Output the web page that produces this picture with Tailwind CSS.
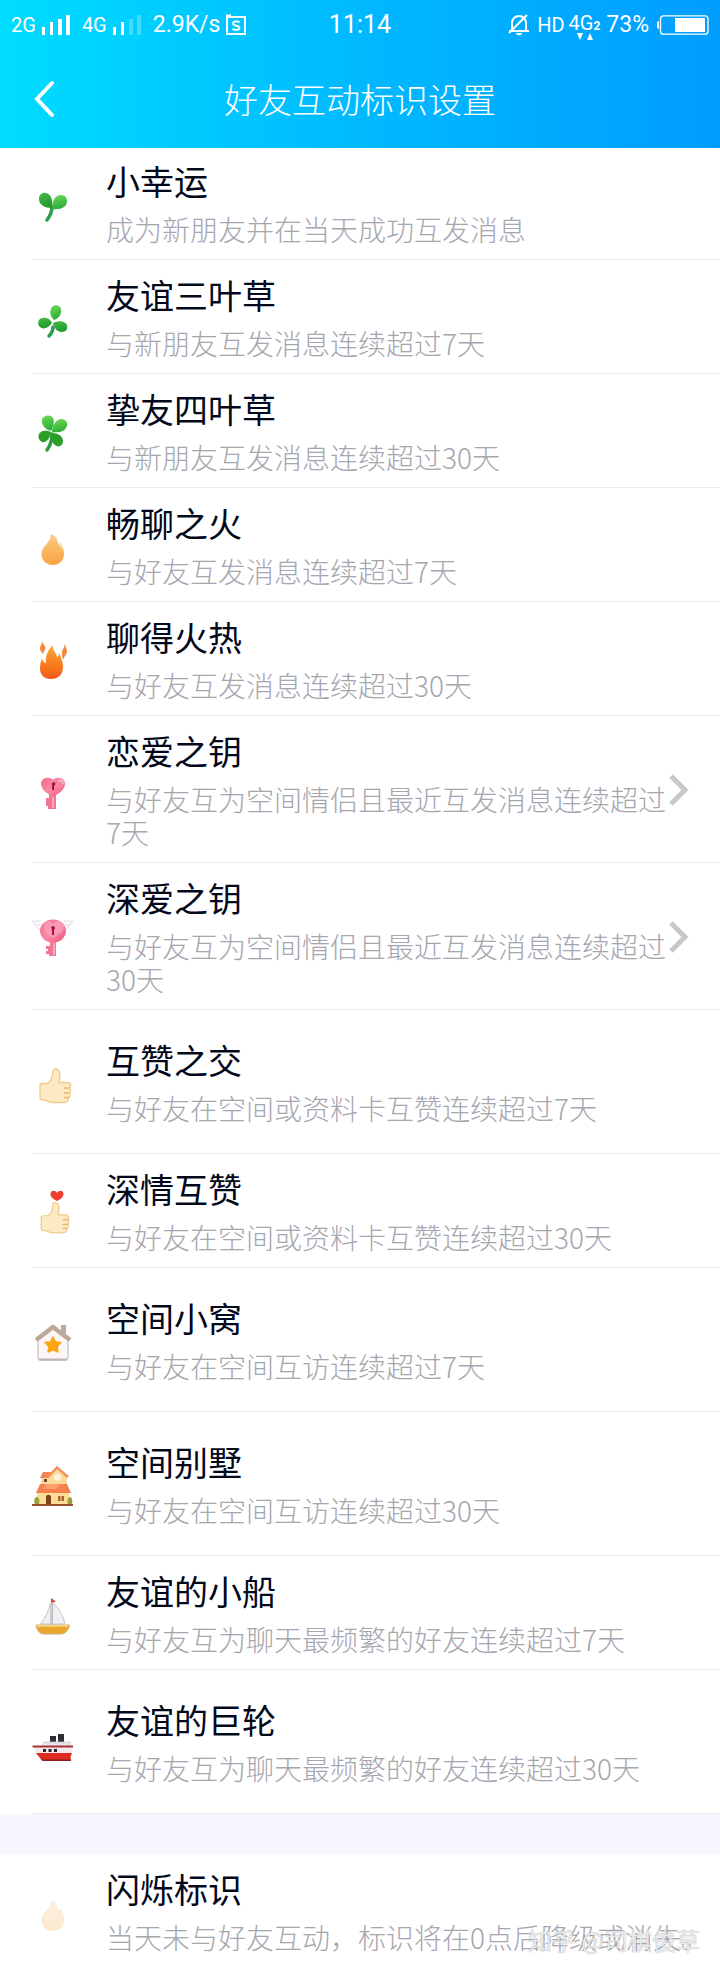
<!DOCTYPE html>
<html lang="zh-CN">
  <head>
    <meta charset="UTF-8" />
    <meta name="viewport" content="width=device-width, initial-scale=1.0" />
    <title>好友互动标识设置</title>
    <script src="https://cdn.jsdelivr.net/npm/@tailwindcss/browser@4"></script>
  </head>
  <body class="bg-white text-[#03081a] font-['Noto_Sans_CJK_SC',sans-serif]">
    <!-- Shared gradients and shapes -->
    <svg class="absolute w-0 h-0" aria-hidden="true">
      <defs>
        <linearGradient id="leaf" x1="0" y1="0" x2="0.3" y2="1">
          <stop offset="0" stop-color="#6fdc55" />
          <stop offset="1" stop-color="#2fae3a" />
        </linearGradient>
        <linearGradient id="leafDark" x1="0" y1="0" x2="0.3" y2="1">
          <stop offset="0" stop-color="#4cb84a" />
          <stop offset="1" stop-color="#1f9a2c" />
        </linearGradient>
        <linearGradient id="flame" x1="0" y1="0" x2="0" y2="1">
          <stop offset="0" stop-color="#fbcb86" />
          <stop offset="1" stop-color="#f9a440" />
        </linearGradient>
        <linearGradient id="hot" x1="0" y1="0" x2="0" y2="1">
          <stop offset="0" stop-color="#fba63c" />
          <stop offset="0.6" stop-color="#f97a1c" />
          <stop offset="1" stop-color="#f4581c" />
        </linearGradient>
        <linearGradient id="pink" x1="0" y1="0" x2="1" y2="1">
          <stop offset="0" stop-color="#f56a8c" />
          <stop offset="0.5" stop-color="#f78aa6" />
          <stop offset="1" stop-color="#f0537a" />
        </linearGradient>
        <g id="thumb">
          <path d="M8 30c0-1.500 1-2.500 2.500-2.500H15c3.500-2 5.500-5.500 5.500-9.500 0-3 0.500-5 3-5s4.500 3 4.500 6c0 3-1 5-1 7.500h8c4 0 4.500 4 2.500 5.500 1.500 1 1.500 4 0 5 1 1.500 1 4-1 5 0 3-1.500 4.500-4.500 4.500H22c-5 0-7-1.500-9-2.500h-2.500C9 44 8 43 8 41.500z" fill="#fdeac4" stroke="#efc98a" stroke-width="1.300" />
          <path d="M32 32h5.500M32 37h5.500M32 41.500h5" stroke="#e8b76a" stroke-width="1.300" fill="none" />
        </g>
      </defs>
    </svg>

    <header class="bg-linear-to-r from-[#00dcff] via-[#00b9ff] to-[#009dff] text-white">
      <!-- Status bar -->
      <div class="grid grid-cols-[1fr_auto_1fr] items-center h-[50px] px-[11px] text-[23px] leading-7 font-[Roboto,sans-serif]">
        <div class="flex items-center">
          <span class="text-xl">2G</span>
          <svg class="w-7 h-5 ml-1.5" viewBox="0 0 28 20" fill="#fff" aria-hidden="true">
            <path d="M0 12h3v8H0zM8 7h3v13H8zM16 4h4v16h-4zM24 0h4v20h-4z" />
          </svg>
          <span class="ml-3 text-xl">4G</span>
          <svg class="w-7 h-5 ml-1.5" viewBox="0 0 28 20" fill="#fff" aria-hidden="true">
            <path d="M0 12h3v8H0zM8 7h3v13H8z" />
            <path d="M16 4h4v16h-4zM24 0h4v20h-4z" opacity="0.25" />
          </svg>
          <span class="ml-3">2.9K/s</span>
          <svg class="w-5 h-[22px] ml-1.5" viewBox="0 0 20 22" fill="none" stroke="#fff" aria-hidden="true">
            <path d="M1 3h18v17H1z" stroke-width="2" />
            <path d="M0 1.500h5" stroke-width="2" />
            <path d="M13.500 8.500c-1-1.500-6.500-1.500-6.500 1 0 3 6.500 1.500 6.500 4.500 0 2.500-6 2.500-7 0.500" stroke-width="1.800" />
          </svg>
        </div>
        <span class="text-[25px]">11:14</span>
        <div class="flex items-center justify-end">
          <svg class="w-6 h-6" viewBox="0 0 24 24" fill="none" stroke="#fff" stroke-width="2" aria-hidden="true">
            <path d="M5 17V10c0-4 3-7 7-7s7 3 7 7v7M2 18h20M2 20L20 2" />
            <path d="M9 20h6c0 3-6 3-6 0z" fill="#fff" stroke="none" />
          </svg>
          <span class="ml-1.5 text-xl">HD</span>
          <span class="relative flex items-baseline ml-1 -mt-1 text-xl leading-5">4G<b class="text-xs">2</b>
            <svg class="absolute left-2 top-5 w-4 h-2" viewBox="0 0 16 8" fill="#fff" aria-hidden="true">
              <path d="M0 0h6L3 7zM10 7h6L13 0z" />
            </svg>
          </span>
          <span class="ml-1.5">73%</span>
          <svg class="w-[52px] h-5 ml-2" viewBox="0 0 52 20" aria-hidden="true">
            <rect x="3.500" y="0.800" width="47.500" height="18.400" rx="3" fill="none" stroke="#fff" stroke-width="1.300" />
            <path d="M18 3h30v14H18zM2 6v8c-3 0-3-8 0-8z" fill="#fff" />
          </svg>
        </div>
      </div>
      <!-- Title bar -->
      <div class="grid grid-cols-[48px_1fr_48px] items-center h-[98px] px-5">
        <button type="button" aria-label="返回" class="flex items-center justify-center w-12 h-12">
          <svg class="w-6 h-10" viewBox="0 0 24 40" fill="none" stroke="#fff" stroke-width="4" stroke-linecap="round" aria-hidden="true">
            <path d="M20 4L5 20L20 36" />
          </svg>
        </button>
        <h1 class="text-center text-[34px] leading-[46px] font-light">好友互动标识设置</h1>
      </div>
    </header>

    <main>
      <ul class="pl-8">
        <li class="flex items-center gap-[30px] border-b border-[#ebebed] pt-3 pb-[13px] pr-8">
          <svg class="shrink-0 w-11 h-13" viewBox="0 0 44 52" aria-hidden="true">
            <path d="M20 30c0 5-2 9-5 13" stroke="#2d9d50" stroke-width="3.500" stroke-linecap="round" fill="none" />
            <path d="M20 31c-7 0-13-3-13-9 0-4 3-7 7-6 5 1 7 7 6 15z" fill="url(#leafDark)" />
            <path d="M20 32c0-8 3-14 9-14 4 0 6 3 6 6 0 6-6 9-15 8z" fill="url(#leaf)" />
          </svg>
          <div class="flex-1 flex flex-col gap-[11px]">
            <h2 class="text-[34px] leading-[42px] font-normal">小幸运</h2>
            <p class="text-[28px] leading-[33px] font-light text-[#a6a6af]">成为新朋友并在当天成功互发消息</p>
          </div>
        </li>
        <li class="flex items-center gap-[30px] border-b border-[#ebebed] pt-3.5 pb-[13px] pr-8">
          <svg class="shrink-0 w-11 h-13" viewBox="0 0 44 52" aria-hidden="true">
            <path d="M21 36c0 4-2 7-4 9" stroke="#2d9d50" stroke-width="3.500" stroke-linecap="round" fill="none" />
            <path d="M22 29c-4-4-5-9-2-13 3-3 8-2 9 2 1 5-2 9-7 11z" fill="url(#leaf)" />
            <path d="M20 32c-4 6-10 7-13 3-2-4 0-8 4-8 4-1 8 2 9 5z" fill="url(#leafDark)" />
            <path d="M21 32c6-3 12-2 14 2 1 4-1 7-5 7-5 0-8-4-9-9z" fill="url(#leafDark)" />
          </svg>
          <div class="flex-1 flex flex-col gap-[11px]">
            <h2 class="text-[34px] leading-[42px] font-normal">友谊三叶草</h2>
            <p class="text-[28px] leading-[33px] font-light text-[#a6a6af]">与新朋友互发消息连续超过7天</p>
          </div>
        </li>
        <li class="flex items-center gap-[30px] border-b border-[#ebebed] pt-3.5 pb-[13px] pr-8">
          <svg class="shrink-0 w-11 h-13" viewBox="0 0 44 52" aria-hidden="true">
            <path d="M20 29c0 6-2 12-5 16" stroke="#2d9a40" stroke-width="3.500" stroke-linecap="round" fill="none" />
            <path d="M19 26c-6-2-10-6-9-12 2-4 8-5 11-1 2 4 0 9-2 13z" fill="url(#leaf)" />
            <path d="M20 27c0-6 3-12 9-13 5 0 7 4 6 7-2 6-9 7-15 6z" fill="url(#leaf)" />
            <path d="M19 27c-1 7-5 11-9 10-4-2-5-8-1-10 3-2 7-1 10 0z" fill="#2b9f25" />
            <path d="M20 28c6 0 11 3 11 8 0 5-5 7-8 4-3-2-4-7-3-12z" fill="#2b9f25" />
          </svg>
          <div class="flex-1 flex flex-col gap-[11px]">
            <h2 class="text-[34px] leading-[42px] font-normal">挚友四叶草</h2>
            <p class="text-[28px] leading-[33px] font-light text-[#a6a6af]">与新朋友互发消息连续超过30天</p>
          </div>
        </li>
        <li class="flex items-center gap-[30px] border-b border-[#ebebed] pt-3.5 pb-[13px] pr-8">
          <svg class="shrink-0 w-11 h-13" viewBox="0 0 44 52" aria-hidden="true">
            <path d="M19 15c5 2 7 6 7 10 1 0 2-1 2-2 3 4 4 8 4 12 0 7-5 11-11 11S9.500 42 9.500 35c0-8 9-10 9.500-20z" fill="url(#flame)" />
            <path d="M26 25c1 0 2-1 2-2 2 3 3 5 3 8-1-2-3-4-5-6z" fill="#fde3b8" />
          </svg>
          <div class="flex-1 flex flex-col gap-[11px]">
            <h2 class="text-[34px] leading-[42px] font-normal">畅聊之火</h2>
            <p class="text-[28px] leading-[33px] font-light text-[#a6a6af]">与好友互发消息连续超过7天</p>
          </div>
        </li>
        <li class="flex items-center gap-[30px] border-b border-[#ebebed] pt-3.5 pb-[13px] pr-8">
          <svg class="shrink-0 w-11 h-13" viewBox="0 0 44 52" aria-hidden="true">
            <path d="M21 12c-1 5 3 7 4 12 1 0 2-2 2-4 2 4 4 9 4 14 0 8-5 12-12 12S8 42 8 35c0-4 1-7 2-9 1 2 2 4 4 4-1-8 3-14 7-18z" fill="url(#hot)" />
            <path d="M11 7.500c-1 4 3 5 2.500 8-0.500 2-2 3-2.500 5.500-2-2-3-4-3-6s2-4 3-7.500zM33 9c-0.500 5 2.500 6 2 10-0.500 3-3 4-3.500 8-1.500-3-2-5-1.500-8s3-5 3-10z" fill="#f08a3c" />
          </svg>
          <div class="flex-1 flex flex-col gap-[11px]">
            <h2 class="text-[34px] leading-[42px] font-normal">聊得火热</h2>
            <p class="text-[28px] leading-[33px] font-light text-[#a6a6af]">与好友互发消息连续超过30天</p>
          </div>
        </li>
        <li class="border-b border-[#ebebed]">
          <a href="#love-key" class="flex items-center pt-3.5 pb-[13px] pr-[31px]">
            <svg class="shrink-0 w-11 h-13 mr-[30px]" viewBox="0 0 44 52" aria-hidden="true">
              <path d="M17 28h7v17h-8v-3h-2v-8h3z" fill="#f27590" />
              <path d="M21 32v12" stroke="#f9a5b8" stroke-width="2" />
              <path d="M21 33c-7-4-12-8-12-13 0-7 9-8 12-4 3-4 12-3 12 4 0 5-5 9-12 13z" fill="url(#pink)" />
              <path d="M26 17c3-1 5 0 5 3" stroke="#fbc0cf" stroke-width="1.500" fill="none" />
              <path d="M20 19c3-2 5 1 2 3v4h-2z" fill="#a81240" />
            </svg>
            <div class="flex-1 flex flex-col gap-[11px]">
              <h2 class="text-[34px] leading-[42px] font-normal">恋爱之钥</h2>
              <p class="text-[28px] leading-[33px] font-light text-[#a6a6af]">与好友互为空间情侣且最近互发消息连续超过7天</p>
            </div>
            <svg class="shrink-0 w-5 h-8" viewBox="0 0 20 32" fill="none" stroke="#c8c8ca" stroke-width="5" aria-hidden="true">
              <path d="M2 2L16 16L2 30" />
            </svg>
          </a>
        </li>
        <li class="border-b border-[#ebebed]">
          <a href="#deep-love-key" class="flex items-center pt-3.5 pb-[13px] pr-[31px]">
            <svg class="shrink-0 w-11 h-13 mr-[30px]" viewBox="0 0 44 52" aria-hidden="true">
              <path d="M9 10H0l3 4h5M3 14l4 5h4M32 10h9l-3 4h-5M38 14l-4 5h-4" stroke="#dfe0e4" stroke-width="1" fill="#fafafc" />
              <path d="M18 30h6v15h-7v-2h-3v-3h2v-2h-2v-3h4z" fill="#f27596" />
              <path d="M22 32v12" stroke="#f9a5bd" stroke-width="2" />
              <ellipse cx="21" cy="20" rx="13" ry="11.500" fill="url(#pink)" />
              <path d="M12 13c3-4 7-3 9 0 4-4 11-3 11 2 0 6-8 10-11 12-5-3-11-8-9-14z" fill="#fb9fb9" opacity="0.8" />
              <path d="M19 16c2-2 6 0 3 3v5h-2v-5z" fill="#a81248" />
            </svg>
            <div class="flex-1 flex flex-col gap-[11px]">
              <h2 class="text-[34px] leading-[42px] font-normal">深爱之钥</h2>
              <p class="text-[28px] leading-[33px] font-light text-[#a6a6af]">与好友互为空间情侣且最近互发消息连续超过30天</p>
            </div>
            <svg class="shrink-0 w-5 h-8" viewBox="0 0 20 32" fill="none" stroke="#c8c8ca" stroke-width="5" aria-hidden="true">
              <path d="M2 2L16 16L2 30" />
            </svg>
          </a>
        </li>
        <li class="flex items-center gap-[30px] min-h-36 border-b border-[#ebebed] pr-8">
          <svg class="shrink-0 w-11 h-13" viewBox="0 0 44 52" aria-hidden="true">
            <use href="#thumb" />
          </svg>
          <div class="flex-1 flex flex-col gap-[11px]">
            <h2 class="text-[34px] leading-[42px] font-normal">互赞之交</h2>
            <p class="text-[28px] leading-[33px] font-light text-[#a6a6af]">与好友在空间或资料卡互赞连续超过7天</p>
          </div>
        </li>
        <li class="flex items-center gap-[30px] border-b border-[#ebebed] pt-3.5 pb-[13px] pr-8">
          <svg class="shrink-0 w-11 h-13" viewBox="0 0 44 52" aria-hidden="true">
            <use href="#thumb" transform="translate(2 6) scale(0.9)" />
            <path d="M25 16c-4-2-6.500-4-6.500-7 0-4 5-4 6.500-1 1.500-3 6.500-3 6.500 1 0 3-2.500 5-6.500 7z" fill="#ec3f2c" />
          </svg>
          <div class="flex-1 flex flex-col gap-[11px]">
            <h2 class="text-[34px] leading-[42px] font-normal">深情互赞</h2>
            <p class="text-[28px] leading-[33px] font-light text-[#a6a6af]">与好友在空间或资料卡互赞连续超过30天</p>
          </div>
        </li>
        <li class="flex items-center gap-[30px] min-h-36 border-b border-[#ebebed] pr-8">
          <svg class="shrink-0 w-11 h-13" viewBox="0 0 44 52" aria-hidden="true">
            <path d="M29 11h5v10l-5-4z" fill="#b9aaa5" />
            <path d="M6 24L21 12l15 12v19c0 2-1 3-3 3H9c-2 0-3-1-3-3z" fill="#fcf7f6" stroke="#cbc2c2" stroke-width="1.300" />
            <path d="M7 45.500h28" stroke="#bdb4b4" stroke-width="2" />
            <path d="M4 26L21 13l17 13" stroke="#bda898" stroke-width="4.500" stroke-linejoin="round" fill="none" />
            <path d="M21 23l2.500 5 5.500 0.500-4 4 1 5.500-5-2.500-5 2.500 1-5.500-4-4 5.500-0.500z" fill="#fca510" stroke="#fca510" stroke-width="1.500" stroke-linejoin="round" />
          </svg>
          <div class="flex-1 flex flex-col gap-[11px]">
            <h2 class="text-[34px] leading-[42px] font-normal">空间小窝</h2>
            <p class="text-[28px] leading-[33px] font-light text-[#a6a6af]">与好友在空间互访连续超过7天</p>
          </div>
        </li>
        <li class="flex items-center gap-[30px] min-h-36 border-b border-[#ebebed] pr-8">
          <svg class="shrink-0 w-11 h-13" viewBox="0 0 44 52" aria-hidden="true">
            <path d="M9 18h7l9-8 10 9v9H9z" fill="#fbd999" />
            <path d="M11 14h9l-3 6H8z" fill="#ee8450" />
            <path d="M16 19L25 9.500 36 19" stroke="#f0945c" stroke-width="2.500" fill="none" />
            <path d="M5 34h32v12H5z" fill="#fcdc96" />
            <path d="M8 26h27l4 9H4z" fill="#f5814c" />
            <path d="M14 26h14l-3 5h-14z" fill="#f9a06c" />
            <path d="M0 46h41v2H0z" fill="#96532c" />
            <path d="M3 46c-2-4 0-7 2-7s3 4 2 7zM36 46c-1-4 0-7 2-7s3 4 2 7z" fill="#93a23c" />
            <path d="M14 46v-7c0-3 5-3 5 0v7zM12 21h3v3h-3z" fill="#7d431f" />
            <path d="M26 38h6v5h-6z" fill="#a8602f" />
            <path d="M29 38v5" stroke="#fcdc96" />
            <circle cx="25.500" cy="19.500" r="3.500" fill="#fff6da" />
          </svg>
          <div class="flex-1 flex flex-col gap-[11px]">
            <h2 class="text-[34px] leading-[42px] font-normal">空间别墅</h2>
            <p class="text-[28px] leading-[33px] font-light text-[#a6a6af]">与好友在空间互访连续超过30天</p>
          </div>
        </li>
        <li class="flex items-center gap-[30px] border-b border-[#ebebed] pt-3.5 pb-[13px] pr-8">
          <svg class="shrink-0 w-11 h-13" viewBox="0 0 44 52" aria-hidden="true">
            <path d="M18.500 16c-2 8-5 15-10 21h10zM21 16c6 5 10 12 12 21H20z" fill="#f0eff2" stroke="#c9c7cd" stroke-width="1" />
            <path d="M20 12v26" stroke="#b5b0b2" stroke-width="1.300" />
            <path d="M19 11l5 3.500-5 1.500z" fill="#c9553f" />
            <path d="M4 38h33.500c-1 5-4 9-8 9H12c-5 0-7-4-8-9z" fill="#eaa72e" stroke="#cdb084" stroke-width="1" />
            <path d="M5 39h31" stroke="#f9cf72" stroke-width="2" />
          </svg>
          <div class="flex-1 flex flex-col gap-[11px]">
            <h2 class="text-[34px] leading-[42px] font-normal">友谊的小船</h2>
            <p class="text-[28px] leading-[33px] font-light text-[#a6a6af]">与好友互为聊天最频繁的好友连续超过7天</p>
          </div>
        </li>
        <li class="flex items-center gap-[30px] min-h-36 border-b border-[#ebebed] pr-8">
          <svg class="shrink-0 w-11 h-13" viewBox="0 0 44 52" aria-hidden="true">
            <path d="M18 20h6v7h-6zM26 18h6v9h-6z" fill="#2e3038" />
            <path d="M12 26h26v5H10z" fill="#e9e7ec" stroke="#c9c6ce" stroke-width="0.800" />
            <path d="M1 30h40l-1 7H4z" fill="#f3e9ea" />
            <path d="M0.500 30.500h40.500" stroke="#a8323a" stroke-width="1.800" />
            <path d="M11 33h3v3h-3zM16.500 33h3v3h-3zM22 33h3v3h-3z" fill="#23252d" />
            <path d="M4 37h36l-1.500 4 0.500 3.500H10z" fill="#dc2b20" />
            <path d="M9 43.500h30v1.500H11z" fill="#8e1c1c" />
          </svg>
          <div class="flex-1 flex flex-col gap-[11px]">
            <h2 class="text-[34px] leading-[42px] font-normal">友谊的巨轮</h2>
            <p class="text-[28px] leading-[33px] font-light text-[#a6a6af]">与好友互为聊天最频繁的好友连续超过30天</p>
          </div>
        </li>
      </ul>

      <div class="h-10 bg-[#f7f6fe]"></div>

      <section class="relative flex items-center gap-[30px] pl-8 pt-3.5 pb-3.5">
        <svg class="shrink-0 w-11 h-13 opacity-25" viewBox="0 0 44 52" aria-hidden="true">
          <path d="M19 15c5 2 7 6 7 10 1 0 2-1 2-2 3 4 4 8 4 12 0 7-5 11-11 11S9.500 42 9.500 35c0-8 9-10 9.500-20z" fill="url(#flame)" />
        </svg>
        <div class="flex-1 flex flex-col gap-[11px]">
          <h2 class="text-[34px] leading-[42px] font-normal">闪烁标识</h2>
          <p class="text-[28px] leading-[33px] font-light text-[#a6a6af]">当天未与好友互动，标识将在0点后降级或消失。</p>
        </div>
        <!-- Watermark -->
        <span class="absolute right-5 bottom-3 text-2xl leading-8 text-white/80 text-shadow-[0_0_1px_#888888]">知乎 @司棋俊草</span>
      </section>
    </main>
  </body>
</html>
